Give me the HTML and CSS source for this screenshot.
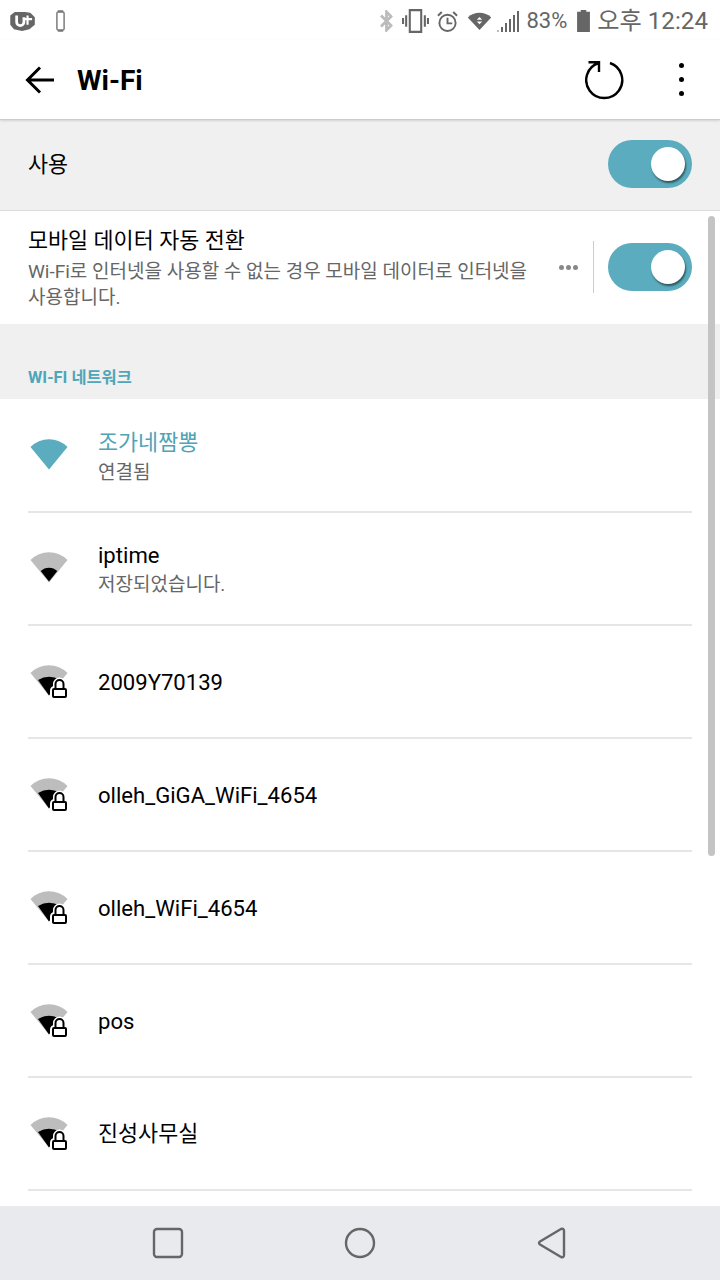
FILE: index.html
```html
<!DOCTYPE html>
<html lang="ko">
<head>
<meta charset="utf-8">
<title>Wi-Fi</title>
<link rel="stylesheet" href="styles.css">
</head>
<body>
<svg class="defs" width="0" height="0">
  <defs>
    <symbol id="fan" viewBox="0 0 38 31"><path d="M0.5 8A26 26 0 0 1 37.5 8L19 30.5Z"/></symbol>
    <symbol id="weak-lock" viewBox="0 0 40 34">
      <path fill="#bdbdbd" d="M0.5 8A26 26 0 0 1 37.5 8L19 30.5Z"/>
      <path fill="#000" d="M8 15A22 22 0 0 1 30 15L19 30.5Z"/>
      <rect x="23" y="24" width="13" height="8" rx="1.5" fill="#fff" stroke="#fff" stroke-width="6"/>
      <path d="M25.5 24v-5a4 4 0 0 1 8 0v5" fill="#fff" stroke="#fff" stroke-width="5"/>
      <rect x="23" y="24" width="13" height="8" rx="1" fill="#fff" stroke="#000" stroke-width="2"/>
      <path d="M25.5 24v-5a4 4 0 0 1 8 0v5" fill="none" stroke="#000" stroke-width="2"/>
    </symbol>
  </defs>
</svg>
<div class="phone">
  <header class="status">
    <div class="status-left">
      <svg class="i-uplus" viewBox="0 0 28 22"><path fill="#666" d="M5 1h11l6 1 5 5v8l-6 5-8 2-9-2-4-5V5Z"/><path fill="none" stroke="#fff" stroke-width="3" d="M7 5v7a4 4 0 0 0 8 0V7"/><path fill="none" stroke="#fff" stroke-width="2.4" d="M19 5v10M15 9h9"/></svg>
      <svg class="i-watch" viewBox="0 0 10 24"><path fill="#777" d="M2 0h6v2H2zM2 22h6v2H2z"/><rect x="1" y="2" width="8" height="20" rx="1.5" fill="#fff" stroke="#777" stroke-width="1.6"/></svg>
    </div>
    <div class="status-right">
      <svg class="i-bt" viewBox="0 0 14 24"><path fill="none" stroke="#bbb" stroke-width="3" d="M1 6l11 11-5 5V2l5 5L1 18"/></svg>
      <svg class="i-vib" viewBox="0 0 26 23"><path fill="none" stroke="#666" stroke-width="2" d="M7.500 1h11v21h-11zM4 6v11M22 6v11M1 8.500v6M25 8.500v6"/></svg>
      <svg class="i-alarm" viewBox="1 1 22 22"><circle cx="12" cy="13.500" r="8.500" fill="none" stroke="#666" stroke-width="2"/><path fill="none" stroke="#666" stroke-width="2" d="M12 8v6h5M2 6l4-4M22 6l-4-4"/></svg>
      <svg class="i-wifi" viewBox="0 0 26 20"><path fill="#666" d="M0 6A19 19 0 0 1 26 6L13 20Z"/><path fill="#fff" d="M13 5.500l3 3h-6zM10 10.500h6l-3 3z"/></svg>
      <svg class="i-signal" viewBox="0 0 22 24"><path fill="#bbb" d="M0 21h2v2H0z"/><path fill="#666" d="M4 18h2v5H4zM8 14h2v9H8zM12 10h2v13h-2zM16 6h2v17h-2zM20 2h2v21h-2z"/></svg>
      <span class="pct">83%</span>
      <svg class="i-batt" viewBox="0 0 14 24"><path fill="#666" d="M4 0h6v2h4v22H0V2h4z"/></svg>
      <span class="clock">오후 12:24</span>
    </div>
  </header>

  <nav class="toolbar">
    <svg class="i-back" viewBox="0 0 29 28"><path fill="none" stroke="#000" stroke-width="3" d="M29 14H3M15 1.500 2.500 14 15 26.500"/></svg>
    <h1 class="title">Wi-Fi</h1>
    <svg class="i-refresh" viewBox="0 0 40 40"><path fill="none" stroke="#000" stroke-width="2.400" d="M25 3A18 18 0 1 1 13.500 3M3.500 2.200H14V12"/></svg>
    <div class="more"><i></i><i></i><i></i></div>
  </nav>

  <section class="use-row">
    <span class="use-label kr">사용</span>
    <div class="toggle"><span class="knob"></span></div>
  </section>

  <section class="auto-row">
    <div class="auto-text">
      <div class="auto-title kr">모바일 데이터 자동 전환</div>
      <div class="auto-sub">Wi-Fi로 인터넷을 사용할 수 없는 경우 모바일 데이터로 인터넷을 사용합니다.</div>
    </div>
    <div class="dots"><i></i><i></i><i></i></div>
    <div class="vline"></div>
    <div class="toggle"><span class="knob"></span></div>
  </section>

  <div class="section-head">WI-FI 네트워크</div>

  <ul class="list">
    <li class="item">
      <svg class="fan teal"><use href="#fan"/></svg>
      <div class="item-text"><div class="name kr active">조가네짬뽕</div><div class="sub">연결됨</div></div>
    </li>
    <li class="item">
      <svg class="fan saved" viewBox="0 0 38 31"><path fill="#bdbdbd" d="M0.500 8A26 26 0 0 1 37.500 8L19 30.500Z"/><path fill="#000" d="M10.700 19A12 12 0 0 1 27.300 19L19 29.500Z"/></svg>
      <div class="item-text"><div class="name tight">iptime</div><div class="sub">저장되었습니다.</div></div>
    </li>
    <li class="item"><svg class="lockfan"><use href="#weak-lock"/></svg><div class="item-text"><div class="name">2009Y70139</div></div></li>
    <li class="item"><svg class="lockfan"><use href="#weak-lock"/></svg><div class="item-text"><div class="name">olleh_GiGA_WiFi_4654</div></div></li>
    <li class="item"><svg class="lockfan"><use href="#weak-lock"/></svg><div class="item-text"><div class="name">olleh_WiFi_4654</div></div></li>
    <li class="item"><svg class="lockfan"><use href="#weak-lock"/></svg><div class="item-text"><div class="name">pos</div></div></li>
    <li class="item"><svg class="lockfan"><use href="#weak-lock"/></svg><div class="item-text"><div class="name kr">진성사무실</div></div></li>
  </ul>

  <div class="scrollbar"></div>

  <footer class="navbar">
    <svg class="nav-i" viewBox="0 0 32 32"><rect x="2" y="2" width="28" height="28" rx="3" fill="none" stroke="#666" stroke-width="2.400"/></svg>
    <svg class="nav-i" viewBox="0 0 32 32"><circle cx="16" cy="16" r="14" fill="none" stroke="#666" stroke-width="2.400"/></svg>
    <svg class="nav-i" viewBox="0 0 32 32"><path fill="none" stroke="#666" stroke-width="2.400" stroke-linejoin="round" d="M4 14.500Q2 16 4 17.500L25 30Q28 31 28 28V4Q28 1 25 2Z"/></svg>
  </footer>
</div>
</body>
</html>
```
FILE: styles.css
```css
* { box-sizing: border-box; }
html, body { margin: 0; padding: 0; }
body { width: 720px; height: 1280px; overflow: hidden; background: #fff; font-family: Roboto, "Noto Sans CJK KR", sans-serif; }
.defs { position: absolute; }
.phone { position: relative; width: 720px; height: 1280px; display: flex; flex-direction: column; overflow: hidden; }

.status { height: 40px; flex: none; display: flex; justify-content: space-between; align-items: center; padding: 2px 12px 0 10px; color: #666; }
.status-left, .status-right { display: flex; align-items: center; }
.i-uplus { width: 26px; height: 20px; }
.i-watch { width: 9px; height: 22px; margin-left: 20px; }
.i-bt { width: 13px; height: 22px; margin-right: 9px; }
.i-vib { width: 27px; height: 24px; margin-right: 8px; }
.i-alarm { width: 21px; height: 21px; margin-right: 9px; }
.i-wifi { width: 25px; height: 18px; margin-right: 5px; }
.i-signal { width: 22px; height: 24px; margin-right: 7px; }
.pct { font-size: 22px; line-height: 38px; margin-right: 9px; }
.i-batt { width: 15px; height: 22px; margin-right: 6px; }
.clock { font-size: 24.200px; line-height: 38px; }

.toolbar { height: 80px; flex: none; display: flex; align-items: center; padding: 0 36px 0 25px; background: #fff; border-bottom: 1px solid #ccc; box-shadow: 0 1px 2px rgba(0,0,0,.12); position: relative; }
.i-back { width: 29px; height: 28px; }
.title { margin: 2px 0 0 23px; font-size: 28px; font-weight: 700; color: #000; flex: 1; }
.i-refresh { width: 40px; height: 40px; margin: 1px 54px 0 0; }
.more { display: flex; flex-direction: column; gap: 9px; }
.more i { width: 5px; height: 5px; border-radius: 50%; background: #000; }

.use-row { height: 91px; flex: none; display: flex; align-items: center; justify-content: space-between; padding: 0 28px 2px; background: #f0f0f0; border-bottom: 1px solid #dcdcdc; }
.use-label { color: #000; margin-bottom: 4px; }
.kr { font-size: 21.800px; }
.toggle { width: 84px; height: 48px; border-radius: 24px; background: #5aacbe; position: relative; flex: none; }
.knob { position: absolute; top: 7px; right: 7px; width: 34px; height: 34px; border-radius: 50%; background: #fff; box-shadow: 1px 2px 2px rgba(0,0,0,.5); }

.auto-row { height: 113px; flex: none; display: flex; align-items: center; padding: 0 28px; background: #fff; }
.auto-text { flex: 1; min-width: 0; padding-top: 2px; }
.auto-title { color: #000; line-height: 30px; }
.auto-sub { font-size: 19px; color: #666; line-height: 26px; margin-top: 3px; }
.dots { display: flex; gap: 2px; margin: 0 0 1px 20px; flex: none; }
.dots i { width: 5px; height: 5px; border-radius: 50%; background: #888; flex: none; }
.vline { width: 1px; height: 52px; background: #ccc; margin: 0 14px 1px 15px; flex: none; }
.auto-row .toggle { margin-bottom: 1px; }

.section-head { height: 75px; flex: none; background: #f0f0f0; padding: 0 28px 11px; display: flex; align-items: flex-end; font-size: 16.400px; font-weight: 700; color: #4fa6b9; }

.list { list-style: none; margin: 0; padding: 1px 0 0; flex: none; }
.item { height: 113px; margin: 0 28px; display: flex; align-items: center; border-bottom: 2px solid #e6e6e6; }
.fan { width: 38px; height: 31px; flex: none; margin: 0 0 2px 2px; }
.teal { fill: #5aacbe; }
.lockfan { width: 40px; height: 34px; flex: none; margin: 1px 0 0 2px; }
.item-text { margin-left: 30px; padding-top: 2px; }
.lockfan + .item-text { margin-left: 28px; padding-top: 0; }
.name { font-size: 22.100px; color: #000; line-height: 30px; }
.name.kr { font-size: 21.800px; }
.name.tight { margin-top: -1px; margin-bottom: 1px; }
.name.active { color: #4fa3b6; }
.sub { font-size: 19px; color: #666; line-height: 26px; margin-top: 2px; }

.scrollbar { position: absolute; left: 708px; top: 216px; width: 7px; height: 640px; border-radius: 4px; background: #c4c4c4; }

.navbar { position: absolute; left: 0; right: 0; bottom: 0; height: 74px; background: #e9eaee; display: flex; justify-content: space-between; align-items: center; padding: 0 152px; }
.nav-i { width: 32px; height: 32px; }
```
